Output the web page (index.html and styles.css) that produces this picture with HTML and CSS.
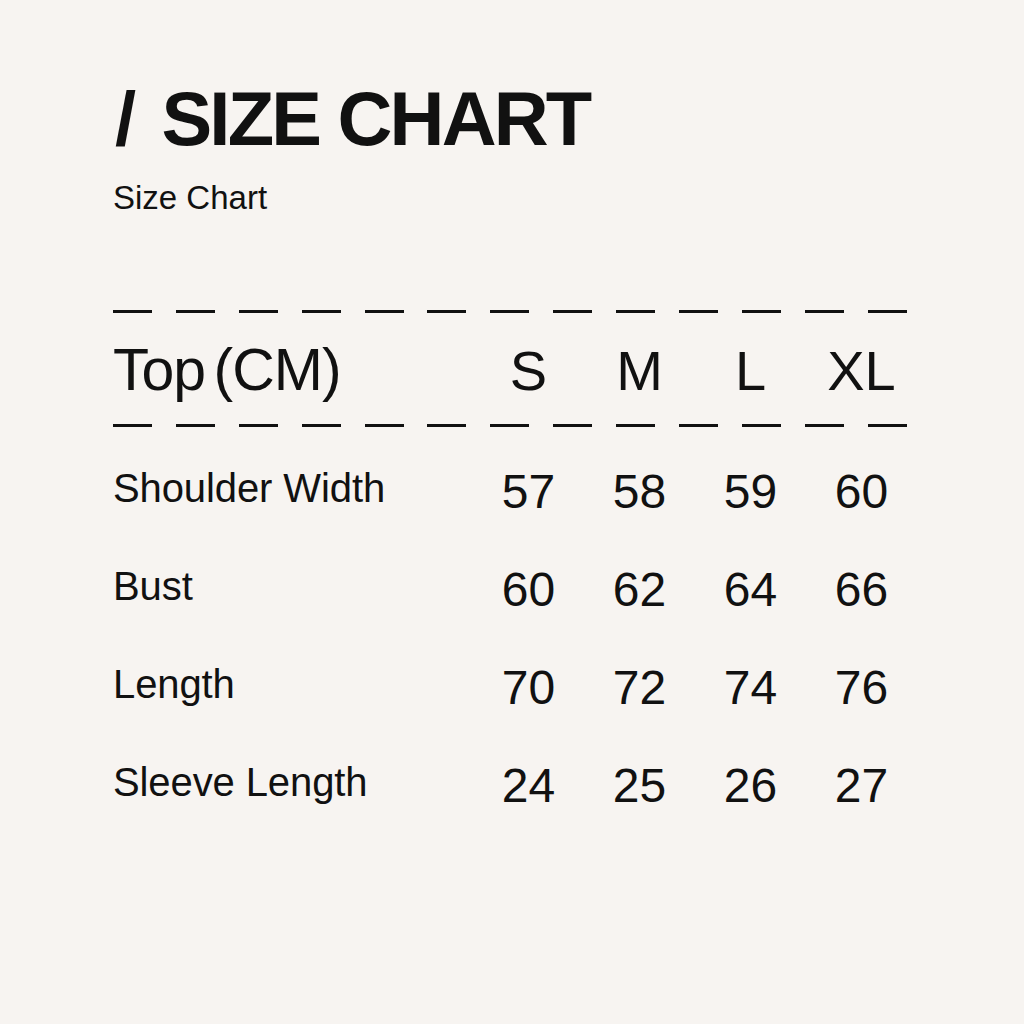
FILE: index.html
```html
<!DOCTYPE html>
<html lang="en">
<head>
<meta charset="utf-8">
<title>Size Chart</title>
<link rel="stylesheet" href="styles.css">
</head>
<body>
<main class="page">
  <h1 class="title"><span class="slash">/</span> SIZE CHART</h1>
  <p class="subtitle">Size Chart</p>

  <div class="dashes dashes-top"></div>
  <div class="row head">
    <div class="label">Top<span class="sp"> </span>(CM)</div>
    <div class="cell">S</div>
    <div class="cell">M</div>
    <div class="cell">L</div>
    <div class="cell">XL</div>
  </div>
  <div class="dashes dashes-bottom"></div>

  <div class="rows">
    <div class="row body">
      <div class="label">Shoulder Width</div>
      <div class="cell">57</div><div class="cell">58</div><div class="cell">59</div><div class="cell">60</div>
    </div>
    <div class="row body">
      <div class="label">Bust</div>
      <div class="cell">60</div><div class="cell">62</div><div class="cell">64</div><div class="cell">66</div>
    </div>
    <div class="row body">
      <div class="label">Length</div>
      <div class="cell">70</div><div class="cell">72</div><div class="cell">74</div><div class="cell">76</div>
    </div>
    <div class="row body">
      <div class="label">Sleeve Length</div>
      <div class="cell">24</div><div class="cell">25</div><div class="cell">26</div><div class="cell">27</div>
    </div>
  </div>
</main>
</body>
</html>
```

FILE: styles.css
```css
html, body {
  margin: 0;
  padding: 0;
  background: #f7f4f1;
}

body {
  width: 1024px;
  height: 1024px;
  overflow: hidden;
  color: #111111;
  font-family: "Liberation Sans", Arial, sans-serif;
}

.page {
  padding: 77px 0 0 113px;
  width: 796px;
}

.title {
  margin: 0;
  padding-top: 4px;
  height: 76px;
  font-size: 76px;
  line-height: 1;
  font-weight: 700;
  letter-spacing: -2.8px;
  margin-left: 2px;
}

.title .slash {
  letter-spacing: 7px;
}

.subtitle {
  margin: 24px 0 0 0;
  font-size: 33px;
  line-height: 1;
  letter-spacing: 0;
}

.dashes {
  height: 3px;
  width: 797px;
  background: repeating-linear-gradient(90deg, #111111 0 39px, transparent 39px 62.9px);
}

.dashes-top {
  margin-top: 96px;
}

.dashes-bottom {
  margin-top: 24px;
}

.row {
  display: grid;
  grid-template-columns: 360px 111px 111px 111px 111px;
  align-items: start;
}

.head {
  margin-top: 30px;
  font-size: 56px;
  line-height: 1;
}

.head .label {
  font-size: 59px;
  letter-spacing: -1px;
  margin-top: -2px;
}

.head .sp {
  letter-spacing: -8px;
}

.head .cell {
  text-align: center;
}

.rows {
  margin-top: 41px;
}

.body {
  height: 98px;
}

.body .label {
  font-size: 40px;
  line-height: 1;
  letter-spacing: -0.1px;
}

.body .cell {
  font-size: 48px;
  line-height: 1;
  text-align: center;
}
```
